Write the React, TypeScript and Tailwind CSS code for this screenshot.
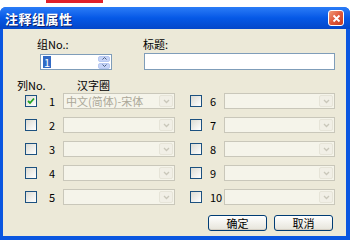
import { Fragment } from "react";

const font = { fontFamily: '"Noto Sans CJK SC", "Liberation Sans", sans-serif' };

function Check({ checked }: { checked?: boolean }) {
  return (
    <span className="w-[12px] h-[12px] border border-[#1c5180] bg-gradient-to-br from-[#dcdbd3] to-white flex items-center justify-center shrink-0">
      {checked && (
        <svg width="8" height="8" viewBox="0 0 8 8">
          <path d="M1 4 L3 6 L7 1.5" fill="none" stroke="#21a121" strokeWidth="1.8" />
        </svg>
      )}
    </span>
  );
}

function Combo({ text, w }: { text?: string; w: string }) {
  return (
    <div className={`${w} h-[16px] border border-[#c9c7ba] bg-[#f5f4ea] flex items-center justify-between pl-[2px] pr-[1px]`}>
      <span className="text-[11px] leading-none text-[#aca899] whitespace-nowrap">{text}</span>
      <span className="w-[14px] h-[12px] rounded-[2px] border border-[#e6e4d8] bg-[#f1efe6] flex items-center justify-center">
        <svg width="7" height="5" viewBox="0 0 7 5">
          <path d="M1 1 L3.5 3.5 L6 1" fill="none" stroke="#c9c7ba" strokeWidth="1.3" />
        </svg>
      </span>
    </div>
  );
}

function Row({ n, checked, text, right }: { n: number; checked?: boolean; text?: string; right?: boolean }) {
  return (
    <div className="flex items-center">
      <Check checked={checked} />
      <span className={`text-[11px] leading-none text-black ${right ? "ml-[8px] w-[14px]" : "ml-[12px] w-[14px]"}`}>{n}</span>
      <Combo text={text} w={right ? "w-[111px]" : "w-[112px]"} />
    </div>
  );
}

function XpButton({ label }: { label: string }) {
  return (
    <button className="w-[59px] h-[16px] rounded-[3px] border border-[#003c74] bg-gradient-to-b from-white to-[#e6e4da] text-[11px] leading-none text-black flex items-center justify-center shadow-[inset_0_-1px_0_#d6d0c5]">
      {label}
    </button>
  );
}

export default function App() {
  const left = [1, 2, 3, 4, 5];
  const right = [6, 7, 8, 9, 10];
  return (
    <div className="w-[350px] h-[240px] bg-white flex flex-col overflow-hidden" style={font}>
      <div className="h-[7px] shrink-0">
        <div className="ml-[46px] w-[57px] h-[3px] bg-[#e0202a]" />
      </div>
      <div className="flex-1 flex flex-col bg-[#0a56e0] rounded-t-[6px] pl-[3px] pr-[4px] pb-[4px]">
        <div className="h-[22px] shrink-0 flex items-center justify-between bg-gradient-to-b from-[#2a7cf7] via-[#0558e6] to-[#0447c9] -mx-[3px] -mr-[4px] px-[5px] rounded-t-[6px]">
          <span className="text-[13px] font-bold tracking-[0.5px] text-white leading-none [text-shadow:1px_1px_0_#0a1f6a]">注释组属性</span>
          <span className="w-[16px] h-[16px] mr-[1px] rounded-[3px] border border-white bg-gradient-to-br from-[#f09a78] via-[#e0573a] to-[#c53a1e] flex items-center justify-center">
            <svg width="9" height="9" viewBox="0 0 9 9">
              <path d="M1.5 1.5 L7.5 7.5 M7.5 1.5 L1.5 7.5" stroke="white" strokeWidth="1.8" />
            </svg>
          </span>
        </div>
        <div className="flex-1 bg-[#ece9d8] flex flex-col text-black">
          <div className="flex mt-[9px] text-[11px] leading-[12px]">
            <span className="ml-[34px] w-[106px]">组No.:</span>
            <span>标题:</span>
          </div>
          <div className="flex mt-[4px]">
            <div className="ml-[37px] w-[72px] h-[16px] border border-[#7f9db9] bg-white flex items-center justify-between pr-[1px]">
              <span className="ml-[2px] px-[1px] bg-[#316ac5] text-white text-[11px] leading-[12px]">1</span>
              <div className="w-[12px] h-[13px] flex flex-col gap-px">
                <span className="flex-1 rounded-[2px] bg-[#c6d4f7] border border-[#b8c9f2] flex items-center justify-center">
                  <svg width="5" height="3" viewBox="0 0 5 3"><path d="M0.5 2.5 L2.5 0.5 L4.5 2.5" fill="none" stroke="#4d6185" /></svg>
                </span>
                <span className="flex-1 rounded-[2px] bg-[#c6d4f7] border border-[#b8c9f2] flex items-center justify-center">
                  <svg width="5" height="3" viewBox="0 0 5 3"><path d="M0.5 0.5 L2.5 2.5 L4.5 0.5" fill="none" stroke="#4d6185" /></svg>
                </span>
              </div>
            </div>
            <div className="ml-[32px] w-[191px] h-[17px] -mt-px border border-[#7f9db9] bg-white" />
          </div>
          <div className="flex mt-[9px] text-[11px] leading-[12px]">
            <span className="ml-[14px] w-[60px]">列No.</span>
            <span>汉字圈</span>
          </div>
          <div className="grid grid-cols-[auto_auto] justify-start gap-y-[8px] mt-[2px]">
            {left.map((n, i) => (
              <Fragment key={n}>
                <div className="ml-[22px]">
                  <Row n={n} checked={n === 1} text={n === 1 ? "中文(简体)-宋体" : undefined} />
                </div>
                <div className="ml-[15px]">
                  <Row n={right[i]} right />
                </div>
              </Fragment>
            ))}
          </div>
          <div className="flex mt-[10px] ml-[205px] gap-[7px]">
            <XpButton label="确定" />
            <XpButton label="取消" />
          </div>
        </div>
      </div>
    </div>
  );
}
